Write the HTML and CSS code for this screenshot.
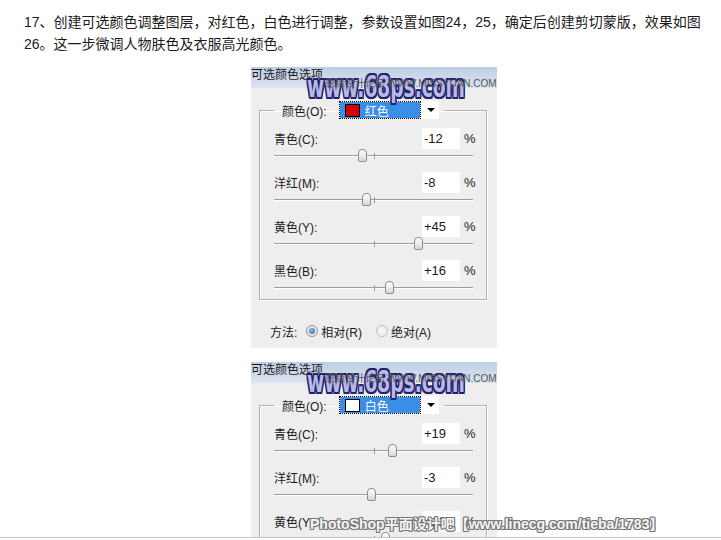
FILE: index.html
```html
<!DOCTYPE html>
<html lang="zh-CN">
<head>
  <meta charset="UTF-8" />
  <title>可选颜色调整</title>
  <link rel="stylesheet" href="styles.css">
</head>
<body>

  <div class="page">
    <p class="intro">17、创建可选颜色调整图层，对红色，白色进行调整，参数设置如图24，25，确定后创建剪切蒙版，效果如图26。这一步微调人物肤色及衣服高光颜色。</p>

    <!-- 图24：红色 -->
    <div class="dialog">
      <div class="titlebar">可选颜色选项</div>
      <div class="mark">www.68ps.com</div>
      <div class="mark-sub">思缘设计论坛 WWW.MISSYUAN.COM</div>

      <fieldset class="group">
        <legend>
          <span class="legend-inner">
            颜色(O):
            <span class="select">
              <span class="chosen"><span class="swatch red"></span>红色</span>
              <span class="arrow"></span>
            </span>
          </span>
        </legend>

        <div class="row"><span class="label">青色(C):</span><span class="val">-12</span><span class="pct">%</span></div>
        <div class="slider"><span class="tick"></span><span class="thumb" style="left:44%"></span></div>

        <div class="row"><span class="label">洋红(M):</span><span class="val">-8</span><span class="pct">%</span></div>
        <div class="slider"><span class="tick"></span><span class="thumb" style="left:46%"></span></div>

        <div class="row"><span class="label">黄色(Y):</span><span class="val">+45</span><span class="pct">%</span></div>
        <div class="slider"><span class="tick"></span><span class="thumb" style="left:72.5%"></span></div>

        <div class="row"><span class="label">黑色(B):</span><span class="val">+16</span><span class="pct">%</span></div>
        <div class="slider"><span class="tick"></span><span class="thumb" style="left:58%"></span></div>
      </fieldset>

      <div class="method">
        方法:
        <span class="radio on"></span><span class="opt">相对(R)</span>
        <span class="radio off"></span><span class="opt">绝对(A)</span>
      </div>
    </div>

    <!-- 图25：白色 -->
    <div class="dialog">
      <div class="titlebar">可选颜色选项</div>
      <div class="mark">www.68ps.com</div>
      <div class="mark-sub">思缘设计论坛 WWW.MISSYUAN.COM</div>

      <fieldset class="group">
        <legend>
          <span class="legend-inner">
            颜色(O):
            <span class="select">
              <span class="chosen"><span class="swatch white"></span>白色</span>
              <span class="arrow"></span>
            </span>
          </span>
        </legend>

        <div class="row"><span class="label">青色(C):</span><span class="val">+19</span><span class="pct">%</span></div>
        <div class="slider"><span class="tick"></span><span class="thumb" style="left:59.5%"></span></div>

        <div class="row"><span class="label">洋红(M):</span><span class="val">-3</span><span class="pct">%</span></div>
        <div class="slider"><span class="tick"></span><span class="thumb" style="left:48.5%"></span></div>

        <div class="row"><span class="label">黄色(Y):</span><span class="val">+12</span><span class="pct">%</span></div>
        <div class="slider"><span class="tick"></span><span class="thumb" style="left:56%"></span></div>
      </fieldset>
    </div>

    <div class="credit">PhotoShop平面设计吧【www.linecg.com/tieba/1783】</div>
  </div>

</body>
</html>
```

FILE: styles.css
```css
body {
  margin: 0;
  background: #fff;
  font-family: "Liberation Sans", "Noto Sans CJK SC", sans-serif;
}

.page {
  position: relative;
  height: 537px;
  overflow: hidden;
  border-bottom: 1px solid #c6c6c6;
}

.intro {
  margin: 0;
  padding: 11px 0 0 24px;
  width: 684px;
  font-size: 14px;
  line-height: 22px;
  color: #1a1a1a;
}

/* Photoshop dialog */
.dialog {
  position: relative;
  width: 246px;
  margin: 12px 0 0 251px;
  padding-bottom: 7px;
  background: #eeeeee;
  font-size: 12px;
  color: #1a1a1a;
}

.dialog + .dialog {
  margin-top: 14px;
}

.titlebar {
  height: 21px;
  line-height: 16px;
  background: linear-gradient(#bfcee4, #dce4ef);
  white-space: nowrap;
}

.mark {
  position: absolute;
  left: 56px;
  top: 3px;
  font-family: "DejaVu Sans", sans-serif;
  font-weight: bold;
  font-size: 31px;
  line-height: 32px;
  color: #b9b9e6;
  white-space: nowrap;
  transform: scaleX(0.6);
  transform-origin: left top;
  text-shadow: 2px 0 #22226a, -2px 0 #22226a, 0 2px #22226a, 0 -2px #22226a,
    2px 2px #22226a, -2px -2px #22226a, 2px -2px #22226a, -2px 2px #22226a;
}

.mark-sub {
  position: absolute;
  left: 74px;
  top: 11px;
  font-size: 10px;
  line-height: 12px;
  color: #555;
  white-space: nowrap;
}

.group {
  margin: 13px 10px 0 8px;
  padding: 8px 13px 4px 14px;
  min-width: 0;
  border: 1px solid #b2b2b2;
  box-shadow: 1px 1px 0 #fff, inset 1px 1px 0 #fff;
}

.group legend {
  padding: 0 5px 0 8px;
}

.legend-inner {
  display: flex;
  align-items: center;
  gap: 12px;
  height: 18px;
}

.select {
  display: flex;
  align-items: center;
  width: 100px;
  height: 18px;
  background: #fff;
}

.chosen {
  display: flex;
  align-items: center;
  gap: 5px;
  box-sizing: border-box;
  width: 80px;
  height: 16px;
  margin-left: 1px;
  padding-left: 5px;
  background: #3a8ee6;
  color: #fff;
  outline: 1px dotted #000;
}

.swatch {
  box-sizing: border-box;
  width: 15px;
  height: 13px;
  border: 1px solid #000;
}

.swatch.red {
  background: #d60000;
}

.swatch.white {
  background: #fff;
}

.arrow {
  margin-left: 7px;
  border-top: 4px solid #000;
  border-left: 4px solid transparent;
  border-right: 4px solid transparent;
}

.row {
  display: flex;
  align-items: center;
  height: 22px;
}

.label {
  flex: 1;
}

.val {
  box-sizing: border-box;
  width: 38px;
  height: 21px;
  padding-left: 2px;
  background: #fff;
  font-size: 13px;
  line-height: 21px;
}

.pct {
  width: 9px;
  margin-left: 4px;
  font-size: 13px;
}

.slider {
  position: relative;
  height: 14px;
  margin-bottom: 8px;
}

.slider:last-child {
  margin-bottom: 0;
}

.slider::before {
  content: "";
  position: absolute;
  left: 0;
  right: 0;
  top: 6px;
  height: 1px;
  background: #9c9c9c;
  box-shadow: 0 1px 0 #fff;
}

.tick {
  position: absolute;
  left: 50%;
  top: 4px;
  width: 1px;
  height: 6px;
  background: #9c9c9c;
}

.thumb {
  position: absolute;
  top: 0;
  box-sizing: border-box;
  width: 9px;
  height: 13px;
  margin-left: -4px;
  border: 1px solid #8c8c8c;
  border-radius: 4px 4px 2px 2px;
  background: linear-gradient(#fff, #d8d8d8);
}

.method {
  display: flex;
  align-items: center;
  height: 20px;
  margin-top: 21px;
  padding-left: 19px;
  white-space: nowrap;
}

.radio {
  display: flex;
  align-items: center;
  justify-content: center;
  box-sizing: border-box;
  width: 12px;
  height: 12px;
  margin: 0 3px 0 9px;
  border-radius: 50%;
  border: 1px solid #8e8f8f;
  background: radial-gradient(circle, #fff, #dcdcdc);
}

.radio.off {
  margin-left: 14px;
  border-color: #c0c0c0;
  background: radial-gradient(circle, #fafafa, #e6e6e6);
}

.radio.on::after {
  content: "";
  width: 6px;
  height: 6px;
  border-radius: 50%;
  background: radial-gradient(circle at 40% 35%, #8cc0ee, #1d5a9a);
}

.credit {
  position: absolute;
  left: 310px;
  top: 516px;
  font-weight: bold;
  font-size: 14px;
  line-height: 16px;
  color: #f5f5f5;
  white-space: nowrap;
  text-shadow: 1px 0 #777, -1px 0 #777, 0 1px #777, 0 -1px #777,
    1px 1px #777, -1px -1px #777, 1px -1px #777, -1px 1px #777;
}
```
